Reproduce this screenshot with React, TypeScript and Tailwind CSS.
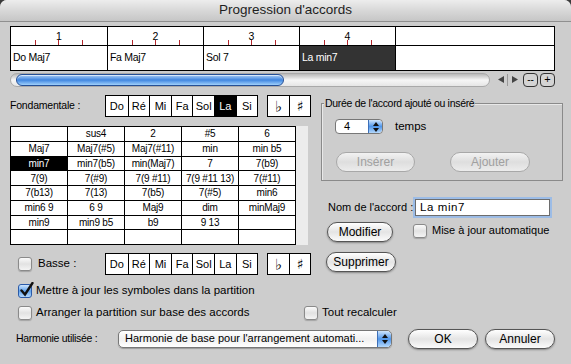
const ui = "font-['Liberation_Sans',Arial,sans-serif]";

const notes = ["Do", "Ré", "Mi", "Fa", "Sol", "La", "Si"];

const chords: string[][] = [
  ["", "sus4", "2", "#5", "6"],
  ["Maj7", "Maj7(#5)", "Maj7(#11)", "min", "min b5"],
  ["min7", "min7(b5)", "min(Maj7)", "7", "7(b9)"],
  ["7(9)", "7(#9)", "7(9 #11)", "7(9 #11 13)", "7(#11)"],
  ["7(b13)", "7(13)", "7(b5)", "7(#5)", "min6"],
  ["min6 9", "6 9", "Maj9", "dim", "minMaj9"],
  ["min9", "min9 b5", "b9", "9 13", ""],
  ["", "", "", "", ""],
];

const bars = [
  { n: "1", chord: "Do Maj7" },
  { n: "2", chord: "Fa Maj7" },
  { n: "3", chord: "Sol 7" },
  { n: "4", chord: "La min7", sel: true },
  { n: "", chord: "" },
];

function NoteBox({ selected }: { selected?: string }) {
  return (
    <div className="flex h-[22px] border border-black bg-white shrink-0">
      {notes.map((n, i) => (
        <div
          key={n}
          className={`w-[21.6px] flex items-center justify-center text-[11px] ${i > 0 ? "border-l border-black" : ""} ${
            n === selected ? "bg-black text-white" : "text-black"
          }`}
        >
          {n}
        </div>
      ))}
    </div>
  );
}

function Accidentals() {
  return (
    <div className="flex h-[22px] border border-black bg-white ml-[9px] shrink-0">
      <div className="w-[21px] flex items-center justify-center text-[15px] font-['DejaVu_Sans',sans-serif] leading-none pt-[2px]">♭</div>
      <div className="w-[21px] flex items-center justify-center border-l border-black text-[14px] font-['DejaVu_Sans',sans-serif] leading-none">♯</div>
    </div>
  );
}

function Checkbox({ checked }: { checked?: boolean }) {
  if (checked) {
    return (
      <div className="relative w-[14px] h-[14px] rounded-[3px] border border-[#2a5aa8] bg-gradient-to-b from-[#cfe5fc] via-[#5fa2ec] to-[#b4d8fb] shrink-0">
        <svg className="absolute -top-[3px] left-[1px]" width="14" height="15" viewBox="0 0 14 15">
          <path d="M1.5 8.5 L5 12.5 L12.5 1" fill="none" stroke="#111" strokeWidth="2.4" strokeLinecap="round" />
        </svg>
      </div>
    );
  }
  return (
    <div className="w-[14px] h-[14px] rounded-[3px] border border-[#8a8a8a] bg-gradient-to-b from-[#fbfbfb] via-[#e2e2e2] to-[#f4f4f4] shadow-[0_1px_1px_rgba(0,0,0,0.2)] shrink-0" />
  );
}

function AquaButton({ label, w, disabled }: { label: string; w: string; disabled?: boolean }) {
  return (
    <div
      className={`${w} h-[20px] rounded-full flex items-center justify-center text-[12px] ${
        disabled
          ? "border border-[#a8a8a8] text-[#a0a0a0] bg-gradient-to-b from-[#f2f2f2] via-[#dedede] to-[#ececec]"
          : "border border-[#555] text-black bg-gradient-to-b from-white via-[#e4e4e4] to-[#fbfbfb] shadow-[0_1px_2px_rgba(0,0,0,0.35)]"
      }`}
    >
      {label}
    </div>
  );
}

function Stepper() {
  return (
    <div className="w-[14px] h-full shrink-0 rounded-r-[4px] bg-gradient-to-b from-[#cfe5fc] via-[#4f96ea] to-[#b4d8fb] border-l border-[#3d6fb8] flex flex-col items-center justify-center gap-[2px]">
      <svg width="6" height="4" viewBox="0 0 6 4"><path d="M0 4 L3 0 L6 4 Z" fill="#111" /></svg>
      <svg width="6" height="4" viewBox="0 0 6 4"><path d="M0 0 L3 4 L6 0 Z" fill="#111" /></svg>
    </div>
  );
}

export default function App() {
  return (
    <div className="w-[571px] h-[364px] bg-[#3a3a3a] overflow-hidden">
      <div className={`w-[571px] h-[364px] rounded-t-[7px] overflow-hidden bg-[#cdcdcd] ${ui}`}>
        {/* Title bar */}
        <div className="h-[22px] bg-gradient-to-b from-[#ededed] via-[#d8d8d8] to-[#c6c6c6] border-b border-[#8f8f8f] flex items-center justify-center text-[13.5px] text-[#1e1e1e]">
          Progression d'accords
        </div>

        <div className="px-[10px]">
          {/* Timeline */}
          <div className="mt-[4px] w-[545px] h-[45px] border border-black bg-white flex">
            {bars.map((b, i) => (
              <div key={i} className={`${i < 4 ? "w-[96px]" : "flex-1"} flex flex-col ${i > 0 ? "border-l border-black" : ""}`}>
                <div className="relative h-[19px] border-b border-black flex justify-center text-[10.5px] pt-[2px]">
                  {b.n}
                  {b.n && (
                    <>
                      <span className="absolute bottom-0 left-[24px] w-px h-[5px] bg-[#b4282d]" />
                      <span className="absolute bottom-0 left-[47px] w-px h-[5px] bg-[#b4282d]" />
                      <span className="absolute bottom-0 left-[71px] w-px h-[5px] bg-[#b4282d]" />
                    </>
                  )}
                </div>
                <div className={`flex-1 flex items-center pl-[2px] text-[10.5px] tracking-[-0.3px] ${b.sel ? "bg-[#333] text-white" : "text-black"}`}>
                  {b.chord}
                </div>
              </div>
            ))}
          </div>

          {/* Scroll bar */}
          <div className="mt-[1px] h-[15px] flex items-center">
            <div className="relative w-[480px] h-[14px] rounded-l-full rounded-r-full bg-gradient-to-b from-[#b9b9b9] via-[#f6f6f6] to-[#e6e6e6] border border-[#a9a9a9]">
              <div className="absolute left-[5px] top-0 w-[268px] h-[12px] rounded-full border border-[#244f96] bg-gradient-to-b from-[#a9cdf6] via-[#3f86e0] to-[#9fd0fb] shadow-[inset_0_1px_0_rgba(255,255,255,0.6)]" />
            </div>
            <div className="ml-[4px] h-[14px] flex items-center text-[#444]">
              <div className="w-[13px] flex justify-center">
                <svg width="6" height="7" viewBox="0 0 6 7"><path d="M6 0 L0 3.5 L6 7 Z" fill="#444" /></svg>
              </div>
              <div className="w-px h-[12px] bg-[#999]" />
              <div className="w-[13px] flex justify-center">
                <svg width="6" height="7" viewBox="0 0 6 7"><path d="M0 0 L6 3.5 L0 7 Z" fill="#444" /></svg>
              </div>
            </div>
            <div className="ml-[2px] w-[15px] h-[14px] rounded-[4px] border border-[#333] bg-[#d4d4d4] flex items-center justify-center text-[10px] leading-none">--</div>
            <div className="ml-[2px] w-[15px] h-[14px] rounded-[4px] border border-[#333] bg-[#d4d4d4] flex items-center justify-center text-[11px] leading-none">+</div>
          </div>

          {/* Main area */}
          <div className="mt-[6px] flex">
            {/* Left column */}
            <div className="w-[301px] shrink-0">
              <div className="mt-[2px] flex items-center">
                <div className="w-[95px] shrink-0 text-[10.5px] tracking-[-0.2px]">Fondamentale :</div>
                <NoteBox selected="La" />
                <Accidentals />
              </div>

              <div className="mt-[9px] flex">
                <div className="w-[286px] h-[119px] border border-black bg-black grid grid-cols-5 grid-rows-8 gap-px">
                  {chords.flat().map((c, i) => (
                    <div
                      key={i}
                      className={`flex items-center justify-center text-[10px] tracking-[-0.2px] ${
                        c === "min7" ? "bg-black text-white" : "bg-white text-black"
                      }`}
                    >
                      {c}
                    </div>
                  ))}
                </div>
                <div className="w-[12px] h-[119px] bg-[#ececec]" />
              </div>

              <div className="mt-[8px] flex items-center">
                <div className="ml-[8px] mr-[6px]">
                  <Checkbox />
                </div>
                <div className="w-[67px] shrink-0 text-[11.5px]">Basse :</div>
                <NoteBox />
                <Accidentals />
              </div>
            </div>

            {/* Right column */}
            <div className="ml-[6px] flex-1">
              <div className="relative mt-[10px] ml-[4px] w-[242px] h-[78px] border border-[#8a8a8a] shadow-[inset_1px_1px_0_#e8e8e8]">
                <div className="absolute -top-[7px] left-[2px] px-[1px] bg-[#cdcdcd] text-[10.5px] leading-[12px] tracking-[-0.3px]">
                  Durée de l'accord ajouté ou inséré
                </div>
                <div className="mt-[14px] ml-[13px] flex items-center">
                  <div className="w-[48px] h-[15px] rounded-[4px] border border-[#777] bg-white flex items-center justify-between overflow-hidden">
                    <span className="pl-[8px] text-[11px]">4</span>
                    <Stepper />
                  </div>
                  <span className="ml-[12px] text-[11.5px]">temps</span>
                </div>
                <div className="mt-[17px] ml-[14px] flex gap-[35px]">
                  <AquaButton label="Insérer" w="w-[79px]" disabled />
                  <AquaButton label="Ajouter" w="w-[80px]" disabled />
                </div>
              </div>

              <div className="mt-[18px] ml-[11px] flex items-center">
                <div className="w-[87px] shrink-0 text-[11px]">Nom de l'accord :</div>
                <div className="w-[135px] h-[17px] border border-[#6d6d6d] bg-white shadow-[0_0_0_2px_#9cbce6] flex items-center pl-[4px] text-[11.5px] tracking-[0.6px]">
                  La min7
                </div>
              </div>

              <div className="mt-[6px] ml-[10px] flex items-center">
                <AquaButton label="Modifier" w="w-[66px]" />
                <div className="ml-[20px] mr-[5px] -mt-[2px]">
                  <Checkbox />
                </div>
                <span className="text-[11px] -mt-[4px]">Mise à jour automatique</span>
              </div>

              <div className="mt-[10px] ml-[9px]">
                <AquaButton label="Supprimer" w="w-[70px]" />
              </div>
            </div>
          </div>

          {/* Options */}
          <div className="mt-[7px] ml-[8px] flex items-center">
            <Checkbox checked />
            <span className="ml-[4px] text-[11.5px]">Mettre à jour les symboles dans la partition</span>
          </div>
          <div className="mt-[5px] ml-[8px] flex items-center">
            <Checkbox />
            <span className="ml-[4px] w-[268px] text-[11.5px]">Arranger la partition sur base des accords</span>
            <Checkbox />
            <span className="ml-[4px] text-[11.5px]">Tout recalculer</span>
          </div>

          <div className="mt-[7px] ml-[6px] flex items-center">
            <div className="w-[102px] shrink-0 text-[10.5px] tracking-[-0.3px]">Harmonie utilisée :</div>
            <div className="w-[274px] h-[18px] shrink-0 rounded-[5px] border border-[#777] bg-gradient-to-b from-white via-[#f0f0f0] to-white flex items-center justify-between overflow-hidden shadow-[0_1px_1px_rgba(0,0,0,0.25)]">
              <span className="pl-[6px] text-[11px] whitespace-nowrap overflow-hidden">Harmonie de base pour l'arrangement automati...</span>
              <Stepper />
            </div>
            <div className="ml-[16px]">
              <AquaButton label="OK" w="w-[70px]" />
            </div>
            <div className="ml-[7px]">
              <AquaButton label="Annuler" w="w-[70px]" />
            </div>
          </div>
        </div>
      </div>
    </div>
  );
}
